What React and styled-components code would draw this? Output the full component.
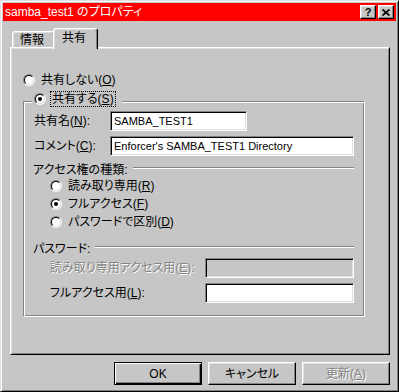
import React from 'react';
import styled, { createGlobalStyle } from 'styled-components';

const face = '#c6c6c6';
const dark = '#848484';
const light = '#dedede';

const GlobalStyle = createGlobalStyle`
  html, body {
    margin: 0;
    padding: 0;
    background: ${face};
  }
  body {
    font-family: "Liberation Sans", "Noto Sans CJK JP", sans-serif;
    font-size: 12px;
  }
`

const Window = styled.div`
  box-sizing: border-box;
  width: 399px;
  height: 392px;
  padding: 2px;
  display: flex;
  flex-direction: column;
  background: ${face};
  border: 1px solid;
  border-color: ${light} #000 #000 ${light};
  box-shadow: inset 1px 1px #fff, inset -1px -1px ${dark};
  font-feature-settings: "palt";
  color: #000;
`
const TitleBar = styled.div`
  height: 18px;
  flex-shrink: 0;
  display: flex;
  align-items: center;
  padding: 0 2px;
  gap: 2px;
  background: #ff0000;
  color: #fff;
`
const TitleText = styled.div`
  flex: 1;
  line-height: 16px;
  white-space: nowrap;
`
const TitleButton = styled.div`
  box-sizing: border-box;
  width: 16px;
  height: 14px;
  display: flex;
  align-items: center;
  justify-content: center;
  background: ${face};
  border: 1px solid;
  border-color: #fff #000 #000 #fff;
  box-shadow: inset -1px -1px ${dark}, inset 1px 1px ${light};
  color: #000;
  font-family: "Liberation Sans", sans-serif;
  font-weight: bold;
  font-size: 11px;
  line-height: 10px;
`
const Body = styled.div`
  flex: 1;
  display: flex;
  flex-direction: column;
  padding: 7px 6px 0 7px;
`
const TabRow = styled.div`
  height: 19px;
  display: flex;
  align-items: flex-end;
  padding-left: 2px;
`
const Tab = styled.div`
  box-sizing: border-box;
  position: relative;
  width: ${p => (p.active ? 45 : 43)}px;
  height: ${p => (p.active ? 21 : 16)}px;
  margin-left: ${p => (p.active ? -2 : 0)}px;
  margin-bottom: ${p => (p.active ? -2 : 0)}px;
  z-index: ${p => (p.active ? 2 : 1)};
  display: flex;
  justify-content: center;
  padding-top: ${p => (p.active ? 2 : 1)}px;
  padding-right: 3px;
  line-height: 14px;
  background: ${face};
  border: 1px solid;
  border-bottom: none;
  border-color: #fff #000 transparent #fff;
  border-radius: 3px 3px 0 0;
  box-shadow: inset -1px 0 ${dark}, inset 1px 1px ${light};
`
const Panel = styled.div`
  box-sizing: border-box;
  position: relative;
  height: 308px;
  padding: 24px 0 0 12px;
  display: flex;
  flex-direction: column;
  border: 1px solid;
  border-color: #fff #000 #000 #fff;
  box-shadow: inset 1px 1px ${light}, inset -1px -1px ${dark};
`
const OptionRow = styled.div`
  display: flex;
  align-items: center;
  height: ${p => p.h || 16}px;
  margin-top: ${p => p.gap || 0}px;
  padding-left: ${p => p.indent || 0}px;
`
const Radio = styled.span`
  box-sizing: border-box;
  flex-shrink: 0;
  width: 12px;
  height: 12px;
  border-radius: 50%;
  border: 1px solid;
  border-color: ${dark} #fff #fff ${dark};
  display: flex;
  align-items: center;
  justify-content: center;
`
const RadioInner = styled.span`
  box-sizing: border-box;
  width: 10px;
  height: 10px;
  border-radius: 50%;
  border: 1px solid;
  border-color: #000 ${light} ${light} #000;
  background: #fff;
  display: flex;
  align-items: center;
  justify-content: center;

  &::after {
    content: '';
    display: ${p => (p.checked ? 'block' : 'none')};
    width: 4px;
    height: 4px;
    border-radius: 50%;
    background: #000;
  }
`
const RadioLabel = styled.span`
  margin-left: 4px;
  padding: 0 1px;
  line-height: 14px;
  white-space: nowrap;
  border: 1px dotted ${p => (p.focused ? '#000' : 'transparent')};
`
const GroupBox = styled.div`
  box-sizing: border-box;
  width: 342px;
  margin-top: 13px;
  padding: 0 10px 13px 10px;
  display: flex;
  flex-direction: column;
  border: 1px solid;
  border-color: ${dark} #fff #fff ${dark};
  box-shadow: inset 1px 1px #fff, inset -1px -1px ${dark};
`
const Legend = styled.div`
  align-self: flex-start;
  display: flex;
  align-items: center;
  height: 16px;
  margin: -11px 0 0 -2px;
  padding: 0 6px 0 2px;
  background: ${face};
`
const FieldRow = styled.div`
  display: flex;
  align-items: center;
  height: 20px;
  margin-top: ${p => p.gap}px;
  padding-left: ${p => p.indent || 0}px;
`
const FieldLabel = styled.div`
  width: ${p => p.w}px;
  flex-shrink: 0;
  white-space: nowrap;
  line-height: 16px;
  color: ${p => (p.disabled ? dark : '#000')};
  text-shadow: ${p => (p.disabled ? '1px 1px #fff' : 'none')};
`
const Field = styled.div`
  box-sizing: border-box;
  width: ${p => p.w}px;
  height: 20px;
  padding: 0 3px;
  display: flex;
  align-items: center;
  background: ${p => (p.disabled ? face : '#fff')};
  border: 1px solid;
  border-color: ${dark} #fff #fff ${dark};
  box-shadow: inset 1px 1px #000, inset -1px -1px ${light};
  font-family: "Liberation Sans", sans-serif;
  font-size: 11px;
  white-space: nowrap;
`
const Heading = styled.div`
  display: flex;
  align-items: center;
  height: 14px;
  margin: ${p => p.gap}px 0 0 -1px;
  white-space: nowrap;
`
const Rule = styled.div`
  flex: 1;
  height: 0;
  margin-left: ${p => p.gap}px;
  border-top: 1px solid ${dark};
  border-bottom: 1px solid #fff;
`
const ButtonRow = styled.div`
  display: flex;
  justify-content: flex-end;
  gap: 6px;
  margin-top: 7px;
`
const Button = styled.div`
  box-sizing: border-box;
  width: 88px;
  height: 23px;
  display: flex;
  align-items: center;
  justify-content: center;
  line-height: 16px;
  background: ${face};
  border: 1px solid;
  border-color: ${p => (p.primary ? '#000' : '#fff #000 #000 #fff')};
  box-shadow: ${p => (p.primary
    ? `inset 1px 1px #fff, inset -1px -1px #000, inset -2px -2px ${dark}`
    : `inset -1px -1px ${dark}, inset 1px 1px ${light}`)};
  color: ${p => (p.disabled ? dark : '#000')};
  text-shadow: ${p => (p.disabled ? '1px 1px #fff' : 'none')};
`

const RadioOption = ({ checked, focused, children, ...rest }) => (
  <OptionRow {...rest}>
    <Radio><RadioInner checked={checked} /></Radio>
    <RadioLabel focused={focused}>{children}</RadioLabel>
  </OptionRow>
);

const CloseGlyph = () => (
  <svg width="8" height="7" viewBox="0 0 8 7">
    <path d="M0.5 0.5 L7.5 6.5 M7.5 0.5 L0.5 6.5" stroke="#000" strokeWidth="1.7" />
  </svg>
);

const App = () => {
  return (
    <>
      <GlobalStyle />
      <Window>
        <TitleBar>
          <TitleText>samba_test1 のプロパティ</TitleText>
          <TitleButton>?</TitleButton>
          <TitleButton><CloseGlyph /></TitleButton>
        </TitleBar>
        <Body>
          <TabRow>
            <Tab>情報</Tab>
            <Tab active>共有</Tab>
          </TabRow>
          <Panel>
            <RadioOption>共有しない(<u>O</u>)</RadioOption>
            <GroupBox>
              <Legend>
                <Radio><RadioInner checked /></Radio>
                <RadioLabel focused>共有する(<u>S</u>)</RadioLabel>
              </Legend>
              <FieldRow gap={4}>
                <FieldLabel w={76}>共有名(<u>N</u>):</FieldLabel>
                <Field w={137}>SAMBA_TEST1</Field>
              </FieldRow>
              <FieldRow gap={5}>
                <FieldLabel w={76}>コメント(<u>C</u>):</FieldLabel>
                <Field w={244}>Enforcer's SAMBA_TEST1 Directory</Field>
              </FieldRow>
              <Heading gap={5}>
                アクセス権の種類:
                <Rule gap={6} />
              </Heading>
              <RadioOption h={18} indent={16} gap={2}>読み取り専用(<u>R</u>)</RadioOption>
              <RadioOption h={18} indent={16} checked>フルアクセス(<u>F</u>)</RadioOption>
              <RadioOption h={18} indent={16}>パスワードで区別(<u>D</u>)</RadioOption>
              <Heading gap={9}>
                パスワード:
                <Rule gap={5} />
              </Heading>
              <FieldRow gap={4} indent={16}>
                <FieldLabel w={155} disabled>読み取り専用アクセス用(<u>E</u>):</FieldLabel>
                <Field w={149} disabled />
              </FieldRow>
              <FieldRow gap={5} indent={16}>
                <FieldLabel w={155}>フルアクセス用(<u>L</u>):</FieldLabel>
                <Field w={149} />
              </FieldRow>
            </GroupBox>
          </Panel>
          <ButtonRow>
            <Button primary>OK</Button>
            <Button>キャンセル</Button>
            <Button disabled>更新(<u>A</u>)</Button>
          </ButtonRow>
        </Body>
      </Window>
    </>
  );
};

export default App;
